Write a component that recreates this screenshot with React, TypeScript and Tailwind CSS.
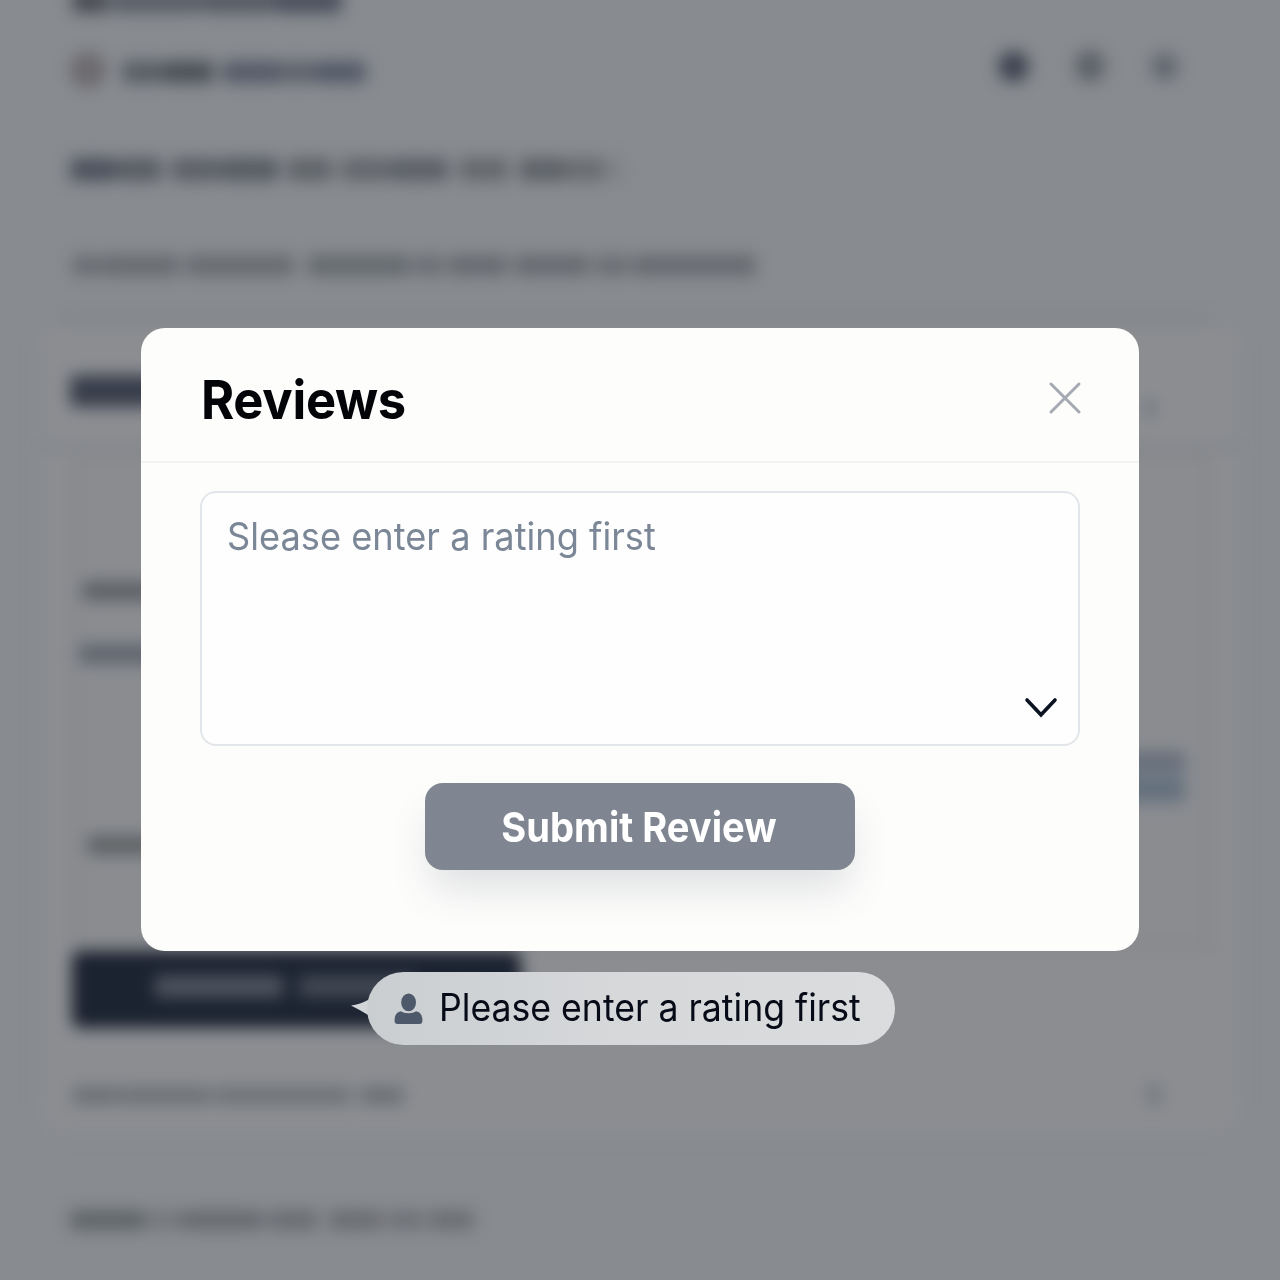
type Word = { gap: number; w: number; tone: string };

const word = (gap: number, w: number, tone: string): Word => ({ gap, w, tone });

/** One line of softened copy, drawn as a run of word-sized strokes. */
function Line({ words, className = '', bar = 'h-5' }: { words: Word[]; className?: string; bar?: string }) {
  return (
    <div className={`flex shrink-0 items-center ${className}`}>
      {words.map((item, i) => (
        <span
          key={i}
          className={`shrink-0 rounded-md ${bar}`}
          style={{ width: item.w, marginLeft: item.gap, backgroundColor: item.tone }}
        />
      ))}
    </div>
  );
}

function PageBehind() {
  return (
    <div aria-hidden="true" className="flex h-full w-full flex-col blur-[8px]">
      <Line
        className="h-[42px] -mt-5 pl-[72px]"
        bar="h-6"
        words={[word(0, 36, '#4b4d54'), word(2, 92, '#5a5f69'), word(0, 72, '#565b65'), word(0, 68, '#4a505e')]}
      />
      <div className="flex h-[96px] shrink-0 items-center justify-between pl-[70px] pr-[102px]">
        <div className="flex items-center">
          <span className="h-9 w-9 rounded-full border-8 border-[#69676c] bg-[#706e72]" />
          <Line
            className="mt-1"
            bar="h-[22px]"
            words={[word(16, 40, '#585d66'), word(0, 52, '#4b5059'), word(8, 60, '#555a68'), word(0, 30, '#5e636d'), word(0, 54, '#535a69')]}
          />
        </div>
        <div className="-mt-2 flex items-center gap-[46px]">
          <span className="h-[31px] w-[31px] rounded-full bg-[#3e4452]" />
          <span className="h-[32px] w-[30px] rounded-full bg-[#5e6369]" />
          <span className="h-[27px] w-[27px] rounded-full bg-[#616670]" />
        </div>
      </div>
      <Line
        className="h-[102px] pl-[70px]"
        bar="h-[23px]"
        words={[
          word(0, 46, '#4c515d'), word(0, 46, '#585c64'), word(9, 50, '#5c6067'), word(0, 58, '#565b63'),
          word(8, 46, '#606469'), word(8, 48, '#63676c'), word(0, 60, '#5c6067'), word(10, 50, '#65686d'),
          word(10, 48, '#5e6267'), word(0, 38, '#696c70'), word(3, 14, '#7d8084'),
        ]}
      />
      <Line
        className="h-[90px] pl-[72px]"
        bar="h-[21px]"
        words={[
          word(0, 30, '#6a6e73'), word(0, 78, '#686c71'), word(5, 110, '#686c71'), word(12, 104, '#656a6f'),
          word(3, 30, '#6b6f74'), word(4, 60, '#676b70'), word(6, 76, '#676b70'), word(5, 34, '#6b6f74'), word(3, 124, '#676b70'),
        ]}
      />
      <div className="mx-9 mt-2 flex h-[818px] shrink-0 flex-col rounded-3xl bg-[#8b8d91]">
        <div className="mr-8 ml-6 h-1.5 shrink-0 bg-[#7f8286]" />
        <div className="flex h-[126px] shrink-0 items-center justify-between border-b-6 border-[#828589] pl-[34px] pr-[88px]">
          <Line className="mt-3.5" bar="h-[32px]" words={[word(0, 100, '#383e4b')]} />
          <span className="mt-12 h-3 w-3 rounded-full bg-[#646b71]" />
        </div>
        <div className="ml-9 mr-[33px] mt-1 flex h-[495px] shrink-0 flex-col border-6 border-[#85878b] bg-[#8a8c90]">
          <Line className="mt-[121px]" words={[word(4, 80, '#5e6266')]} />
          <Line className="mt-[43px]" words={[word(1, 80, '#60656e')]} />
          <div className="mt-[88px] flex shrink-0 justify-end pr-[20px]">
            <div className="flex w-20 flex-col gap-2 rounded-md bg-[#78818b]">
              <span className="h-[18px] rounded-md bg-[#656d79]" />
              <span className="h-6 rounded-md bg-[#64707d]" />
            </div>
          </div>
          <Line className="mt-[33px]" words={[word(9, 80, '#606467')]} />
        </div>
        <div className="ml-9 mt-0.5 flex h-[77px] w-[449px] shrink-0 items-center rounded-lg bg-[#1b2230]">
          <Line className="-mt-1.5" bar="h-[23px]" words={[word(82, 130, '#4c535d'), word(14, 120, '#414853')]} />
        </div>
        <div className="flex shrink-0 items-center pl-9 pt-[55px]">
          <Line
            bar="h-[17px]"
            words={[word(0, 46, '#6b6f73'), word(0, 94, '#6d7175'), word(2, 138, '#6e7276'), word(8, 44, '#6a6e73')]}
          />
          <span className="ml-[742px] h-6 w-4 rounded-full bg-[#777b7f]" />
        </div>
      </div>
      <Line
        className="mt-[74px] h-5 pl-[70px]"
        words={[
          word(0, 76, '#606569'), word(2, 32, '#75787c'), word(0, 84, '#686b70'), word(4, 50, '#6a6d72'),
          word(10, 54, '#6b6d72'), word(4, 38, '#6f7277'), word(4, 46, '#6c6e73'),
        ]}
      />
    </div>
  );
}

function ReviewDialog() {
  return (
    <section
      role="dialog"
      aria-labelledby="reviews-title"
      className="flex h-[623px] w-[998px] flex-col rounded-3xl bg-[#fdfdfc]"
    >
      <header className="flex h-[135px] shrink-0 items-center justify-between border-b-2 border-[#f1f3f3] pl-[60px] pr-[56px]">
        <h2 id="reviews-title" className="mt-2.5 origin-left scale-x-[0.938] whitespace-nowrap text-[54px] font-bold leading-none tracking-[-0.3px] text-[#030408]">
          Reviews
        </h2>
        <button type="button" aria-label="Close" className="mt-1.5">
          <svg width="36" height="36" viewBox="0 0 36 36" fill="none" stroke="#a5a9b2" strokeWidth="3" strokeLinecap="round">
            <path d="M4 4 32 32M32 4 4 32" />
          </svg>
        </button>
      </header>
      <div className="flex flex-col items-center px-[60px] pt-7">
        <div className="flex h-[255px] w-[880px] flex-col justify-between rounded-2xl border-2 border-[#e2e6ea] bg-[#fdfefd]">
          <p className="ml-[25px] mt-[22px] origin-left scale-x-[0.953] whitespace-nowrap text-[38px] leading-[42px] text-[#7b8797]">
            Slease enter a rating first
          </p>
          <svg className="mb-[25px] mr-5 self-end" width="34" height="22" viewBox="0 0 34 22" fill="none" stroke="#0b1222" strokeWidth="3.6" strokeLinecap="round" strokeLinejoin="miter">
            <path d="M3 3 17 17.8 31 3" />
          </svg>
        </div>
        <button
          type="button"
          className="mt-[37px] flex h-[87px] w-[430px] items-center justify-center rounded-[18px] bg-[#7f8691] text-[41px] font-bold text-white shadow-[0_24px_40px_-6px_rgba(60,70,90,0.16)]"
        >
          <span className="-ml-0.5 mt-0.5 scale-x-[0.93] whitespace-nowrap">Submit Review</span>
        </button>
      </div>
    </section>
  );
}

function RatingHint() {
  return (
    <div className="flex w-[544px] items-center">
      <svg className="-mr-0.5 -mt-1.5 shrink-0" width="18" height="18" viewBox="0 0 18 18" fill="#d3d6d9">
        <path d="M0 8.5Q9 7.5 18 2.6V18.5Q9 13 0 8.5Z" />
      </svg>
      <div className="flex h-[73px] w-[528px] shrink-0 items-center rounded-full bg-gradient-to-r from-[#cbced1] via-[#d6d8da] to-[#dbdcde] pl-[27px]">
        <svg className="shrink-0" width="29" height="32" viewBox="0 0 29 32" fill="#4d596a">
          <ellipse cx="14.6" cy="9.4" rx="7.4" ry="8.9" />
          <path d="M3.5 31Q.6 31 .6 28C.4 23 2.2 19 7 18.2 10 20.8 19 20.8 22 18.2 26.8 19 28.6 23 28.4 28Q28.4 31 25.5 31Z" />
        </svg>
        <span className="-mt-px ml-4 origin-left scale-x-[0.95] whitespace-nowrap text-[37.5px] leading-none text-[#070b17]">
          Please enter a rating first
        </span>
      </div>
    </div>
  );
}

export default function App() {
  return (
    <main className="relative h-[1280px] w-[1280px] overflow-hidden bg-[#888b8f] font-['Inter',sans-serif]">
      <PageBehind />
      <div className="absolute inset-0 flex flex-col items-center pt-[328px]">
        <ReviewDialog />
        <div className="mr-[34px] mt-[21px]">
          <RatingHint />
        </div>
      </div>
    </main>
  );
}
